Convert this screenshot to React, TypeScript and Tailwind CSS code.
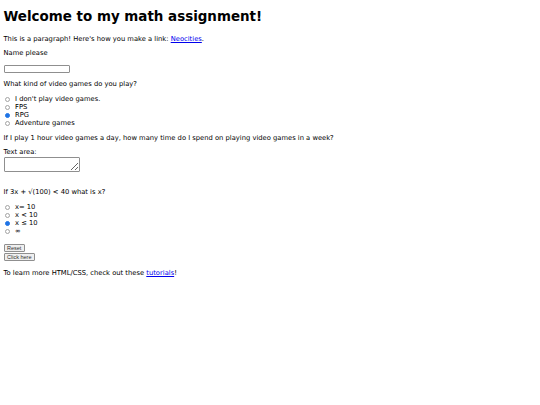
import React from "react";

const font = "font-['DejaVu_Sans',Verdana,sans-serif]";

function Radio({ label, checked }: { label: string; checked?: boolean }) {
  return (
    <label className="flex items-center h-[8px]">
      <input
        type="radio"
        defaultChecked={checked}
        className="appearance-none w-[5px] h-[5px] ml-[1.5px] mr-[5px] mt-[1px] rounded-full border-[0.75px] border-[#a3a3a3] bg-white checked:bg-[#1f74e6] checked:border-[#1f74e6]"
      />
      <span>{label}</span>
    </label>
  );
}

export default function App() {
  return (
    <div className={`${font} bg-white text-black text-[6.75px] leading-[8px] min-h-[405px] px-[3.5px]`}>
      <h1 className="text-[13.45px] font-bold leading-[16px] pt-[9px]">Welcome to my math assignment!</h1>

      <p className="mt-[10px]">
        This is a paragraph! Here's how you make a link:{" "}
        <a href="#" className="text-[#0000ee] underline">Neocities</a>.
      </p>
      <p className="mt-[6px]">Name please</p>
      <input type="text" className="block mt-[8px] w-[66px] h-[8px] border-[0.75px] border-[#8f8f8f] rounded-[1px]" />

      <p className="mt-[7px]">What kind of video games do you play?</p>
      <div className="mt-[7px]">
        <Radio label="I don't play video games." />
        <Radio label="FPS" />
        <Radio label="RPG" checked />
        <Radio label="Adventure games" />
      </div>

      <p className="mt-[7px]">If I play 1 hour video games a day, how many time do I spend on playing video games in a week?</p>
      <p className="mt-[6px]">Text area:</p>
      <textarea className="block mt-[1px] w-[76px] h-[15px] border-[0.75px] border-[#8f8f8f] rounded-[1px] resize" />

      <p className="mt-[16px]">If 3x + √(100) &lt; 40 what is x?</p>
      <div className="mt-[7px]">
        <Radio label="x= 10" />
        <Radio label="x < 10" />
        <Radio label="x ≤ 10" checked />
        <Radio label="∞" />
      </div>

      <div className="mt-[9px] flex flex-col items-start gap-[1px]">
        <button className="h-[8px] px-[2.5px] text-[5.5px] leading-[6px] text-[#333] bg-[#efefef] border-[0.75px] border-[#8f8f8f] rounded-[1px] font-['Liberation_Sans',Arial,sans-serif]">Reset</button>
        <button className="h-[8px] px-[2.5px] text-[5.5px] leading-[6px] text-[#333] bg-[#efefef] border-[0.75px] border-[#8f8f8f] rounded-[1px] font-['Liberation_Sans',Arial,sans-serif]">Click here</button>
      </div>

      <p className="mt-[8px]">
        To learn more HTML/CSS, check out these{" "}
        <a href="#" className="text-[#0000ee] underline">tutorials</a>!
      </p>
    </div>
  );
}
